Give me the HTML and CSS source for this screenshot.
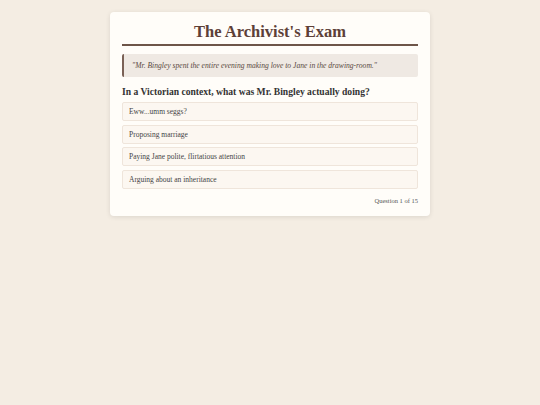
FILE: index.html
```html
<!DOCTYPE html>
<html lang="en">
<head>
    <meta charset="UTF-8">
    <meta name="viewport" content="width=device-width, initial-scale=1.0">
    <title>The Archivist's Exam</title>
    <link rel="stylesheet" href="styles.css">
</head>
<body>
    <div class="container">
        <h1>The Archivist's Exam</h1>

        <blockquote class="passage">"Mr. Bingley spent the entire evening making love to Jane in the drawing-room."</blockquote>

        <h2 class="question">In a Victorian context, what was Mr. Bingley actually doing?</h2>

        <div class="options">
            <div class="option">Eww...umm seggs?</div>
            <div class="option">Proposing marriage</div>
            <div class="option">Paying Jane polite, flirtatious attention</div>
            <div class="option">Arguing about an inheritance</div>
        </div>

        <div class="progress">Question 1 of 15</div>
    </div>
</body>
</html>
```

FILE: styles.css
```css
body {
    font-family: "Liberation Serif", Georgia, serif;
    margin: 0;
    padding: 12px 0;
    background-color: #f4ede3;
    color: #333;
}
.container {
    width: 296px;
    margin: 0 auto;
    padding: 10px 12px 10.5px;
    background: #fffdf9;
    border-radius: 4px;
    box-shadow: 0 1px 5px rgba(0,0,0,0.1);
}
h1 {
    margin: 0 0 8px;
    padding-bottom: 2px;
    text-align: center;
    font-size: 16.5px;
    line-height: 20px;
    color: #5d4037;
    border-bottom: 2px solid #6d5549;
}
.passage {
    margin: 0 0 9px;
    padding: 6px 8px;
    background: #efe9e3;
    border-left: 2px solid #7a6156;
    border-radius: 2px;
    font-style: italic;
    font-size: 7.6px;
    line-height: 11px;
    color: #5a4a42;
}
.question {
    margin: 0 0 4px;
    font-size: 9.6px;
    line-height: 12px;
    color: #333;
}
.options {
    display: flex;
    flex-direction: column;
    gap: 3.5px;
}
.option {
    padding: 4px 6px;
    background: #fcf7f1;
    border: 1px solid #efe5db;
    border-radius: 2px;
    font-size: 7.5px;
    line-height: 9px;
    color: #444;
}
.progress {
    margin-top: 7.5px;
    text-align: right;
    font-size: 6.5px;
    line-height: 9px;
    color: #555;
}
```
